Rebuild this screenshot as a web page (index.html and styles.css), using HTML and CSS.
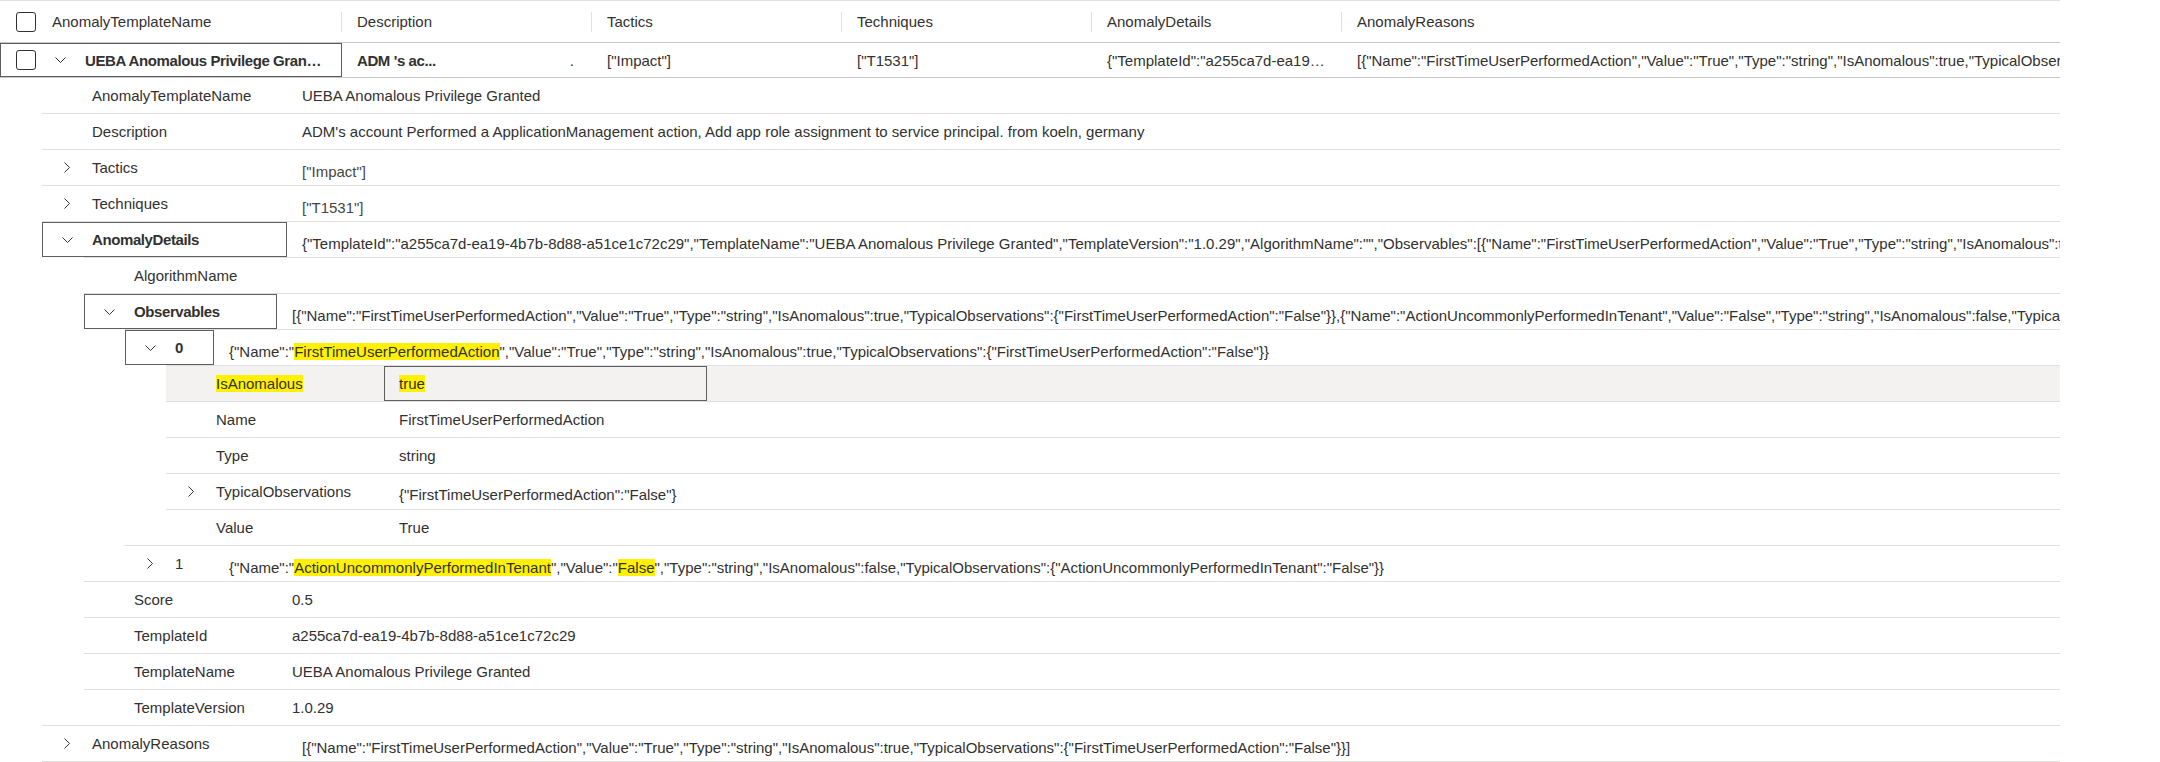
FILE: index.html
```html
<!DOCTYPE html>
<html lang="en">
<head>
    <meta charset="UTF-8">
    <meta name="viewport" content="width=device-width, initial-scale=1.0">
    <title>Anomalies</title>
    <link rel="stylesheet" href="styles.css">
</head>
<body>
    <div class="grid">
        <div class="head">
            <div class="hc first"><span class="box"></span>AnomalyTemplateName</div>
            <span class="sep"></span>
            <div class="hc">Description</div>
            <span class="sep"></span>
            <div class="hc">Tactics</div>
            <span class="sep"></span>
            <div class="hc">Techniques</div>
            <span class="sep"></span>
            <div class="hc">AnomalyDetails</div>
            <span class="sep"></span>
            <div class="hc last">AnomalyReasons</div>
        </div>

        <div class="r1">
            <div class="c first">
                <span class="box"></span>
                <svg class="chev-down" width="11" height="6" viewBox="0 0 11 6"><path d="M0.5 0.5 5.5 5.5 10.5 0.5" fill="none" stroke="#323130"/></svg>
                <span class="trunc strong">UEBA Anomalous Privilege Granted</span>
            </div>
            <div class="c desc"><b>ADM 's ac...</b><span>.</span></div>
            <div class="c">["Impact"]</div>
            <div class="c">["T1531"]</div>
            <div class="c">{"TemplateId":"a255ca7d-ea19-4b7b-8d88-a51ce1c72c29","TemplateName":"UEBA Anomalous Privilege Granted"}</div>
            <div class="c last">[{"Name":"FirstTimeUserPerformedAction","Value":"True","Type":"string","IsAnomalous":true,"TypicalObservations":{"FirstTimeUserPerformedAction":"False"}}]</div>
        </div>

        <div class="details lvl1">
            <div class="node">
                <div class="row"><div class="key"><span class="tog"></span>AnomalyTemplateName</div><div class="val">UEBA Anomalous Privilege Granted</div></div>
            </div>
            <div class="node">
                <div class="row"><div class="key"><span class="tog"></span>Description</div><div class="val">ADM's account Performed a ApplicationManagement action, Add app role assignment to service principal. from koeln, germany</div></div>
            </div>
            <div class="node">
                <div class="row exp"><div class="key"><span class="tog"><svg width="6" height="11" viewBox="0 0 6 11"><path d="M0.5 0.5 5.5 5.5 0.5 10.5" fill="none" stroke="#323130"/></svg></span>Tactics</div><div class="val dim">["Impact"]</div></div>
            </div>
            <div class="node">
                <div class="row exp"><div class="key"><span class="tog"><svg width="6" height="11" viewBox="0 0 6 11"><path d="M0.5 0.5 5.5 5.5 0.5 10.5" fill="none" stroke="#323130"/></svg></span>Techniques</div><div class="val dim">["T1531"]</div></div>
            </div>
            <div class="node">
                <div class="row exp"><div class="key focus"><span class="tog"><svg width="11" height="6" viewBox="0 0 11 6"><path d="M0.5 0.5 5.5 5.5 10.5 0.5" fill="none" stroke="#323130"/></svg></span><b>AnomalyDetails</b></div><div class="val">{"TemplateId":"a255ca7d-ea19-4b7b-8d88-a51ce1c72c29","TemplateName":"UEBA Anomalous Privilege Granted","TemplateVersion":"1.0.29","AlgorithmName":"","Observables":[{"Name":"FirstTimeUserPerformedAction","Value":"True","Type":"string","IsAnomalous":true,"TypicalObservations":{"FirstTimeUserPerformedAction":"False"}}]}</div></div>

                <div class="kids lvl2">
                    <div class="node">
                        <div class="row"><div class="key"><span class="tog"></span>AlgorithmName</div><div class="val"></div></div>
                    </div>
                    <div class="node">
                        <div class="row exp"><div class="key focus"><span class="tog"><svg width="11" height="6" viewBox="0 0 11 6"><path d="M0.5 0.5 5.5 5.5 10.5 0.5" fill="none" stroke="#323130"/></svg></span><b>Observables</b></div><div class="val">[{"Name":"FirstTimeUserPerformedAction","Value":"True","Type":"string","IsAnomalous":true,"TypicalObservations":{"FirstTimeUserPerformedAction":"False"}},{"Name":"ActionUncommonlyPerformedInTenant","Value":"False","Type":"string","IsAnomalous":false,"TypicalObservations":{"ActionUncommonlyPerformedInTenant":"False"}}]</div></div>

                        <div class="kids lvl3">
                            <div class="node">
                                <div class="row exp"><div class="key focus"><span class="tog"><svg width="11" height="6" viewBox="0 0 11 6"><path d="M0.5 0.5 5.5 5.5 10.5 0.5" fill="none" stroke="#323130"/></svg></span><b>0</b></div><div class="val">{"Name":"<span class="hl">FirstTimeUserPerformedAction</span>","Value":"True","Type":"string","IsAnomalous":true,"TypicalObservations":{"FirstTimeUserPerformedAction":"False"}}</div></div>

                                <div class="kids lvl4">
                                    <div class="node">
                                        <div class="row sel"><div class="key"><span class="tog"></span><span class="hl">IsAnomalous</span></div><div class="val focus"><span class="hl">true</span></div></div>
                                    </div>
                                    <div class="node">
                                        <div class="row"><div class="key"><span class="tog"></span>Name</div><div class="val">FirstTimeUserPerformedAction</div></div>
                                    </div>
                                    <div class="node">
                                        <div class="row"><div class="key"><span class="tog"></span>Type</div><div class="val">string</div></div>
                                    </div>
                                    <div class="node">
                                        <div class="row exp"><div class="key"><span class="tog"><svg width="6" height="11" viewBox="0 0 6 11"><path d="M0.5 0.5 5.5 5.5 0.5 10.5" fill="none" stroke="#323130"/></svg></span>TypicalObservations</div><div class="val">{"FirstTimeUserPerformedAction":"False"}</div></div>
                                    </div>
                                    <div class="node">
                                        <div class="row"><div class="key"><span class="tog"></span>Value</div><div class="val">True</div></div>
                                    </div>
                                </div>
                            </div>
                            <div class="node">
                                <div class="row exp"><div class="key"><span class="tog"><svg width="6" height="11" viewBox="0 0 6 11"><path d="M0.5 0.5 5.5 5.5 0.5 10.5" fill="none" stroke="#323130"/></svg></span>1</div><div class="val">{"Name":"<span class="hl">ActionUncommonlyPerformedInTenant</span>","Value":"<span class="hl">False</span>","Type":"string","IsAnomalous":false,"TypicalObservations":{"ActionUncommonlyPerformedInTenant":"False"}}</div></div>
                            </div>
                        </div>
                    </div>
                    <div class="node">
                        <div class="row"><div class="key"><span class="tog"></span>Score</div><div class="val">0.5</div></div>
                    </div>
                    <div class="node">
                        <div class="row"><div class="key"><span class="tog"></span>TemplateId</div><div class="val">a255ca7d-ea19-4b7b-8d88-a51ce1c72c29</div></div>
                    </div>
                    <div class="node">
                        <div class="row"><div class="key"><span class="tog"></span>TemplateName</div><div class="val">UEBA Anomalous Privilege Granted</div></div>
                    </div>
                    <div class="node">
                        <div class="row"><div class="key"><span class="tog"></span>TemplateVersion</div><div class="val">1.0.29</div></div>
                    </div>
                </div>
            </div>
            <div class="node">
                <div class="row exp"><div class="key"><span class="tog"><svg width="6" height="11" viewBox="0 0 6 11"><path d="M0.5 0.5 5.5 5.5 0.5 10.5" fill="none" stroke="#323130"/></svg></span>AnomalyReasons</div><div class="val">[{"Name":"FirstTimeUserPerformedAction","Value":"True","Type":"string","IsAnomalous":true,"TypicalObservations":{"FirstTimeUserPerformedAction":"False"}}]</div></div>
            </div>
        </div>
    </div>
</body>
</html>
```

FILE: styles.css
```css
body {
    margin: 0;
    background-color: #fff;
    color: #323130;
    font-family: "Segoe UI", "Liberation Sans", Arial, sans-serif;
    font-size: 15px;
}
b, .strong {
    font-weight: 600;
    letter-spacing: -0.4px;
}
.grid {
    width: 2060px;
    overflow: hidden;
}
.box {
    flex: none;
    width: 20px;
    height: 20px;
    box-sizing: border-box;
    border: 1px solid #323130;
    border-radius: 3px;
}
.head {
    display: flex;
    align-items: center;
    height: 41px;
    border-top: 1px solid #e1dfdd;
    border-bottom: 1px solid #c8c6c4;
}
.hc {
    flex: none;
    width: 249px;
    box-sizing: border-box;
    padding-left: 15px;
    white-space: nowrap;
}
.hc.first {
    width: 341px;
    display: flex;
    align-items: center;
    gap: 16px;
    padding-left: 16px;
}
.hc.last {
    flex: 1;
}
.sep {
    flex: none;
    width: 1px;
    height: 20px;
    background-color: #e1dfdd;
}
.r1 {
    display: flex;
    align-items: center;
    height: 34px;
    border-bottom: 1px solid #c8c6c4;
}
.r1 .c {
    flex: none;
    width: 250px;
    box-sizing: border-box;
    padding: 0 16px 0 15px;
    white-space: nowrap;
    overflow: hidden;
    text-overflow: ellipsis;
}
.r1 .c.first {
    width: 342px;
    height: 100%;
    display: flex;
    align-items: center;
    padding: 0 18px 0 16px;
    outline: 1px solid #605e5c;
    outline-offset: -1px;
}
.r1 .chev-down {
    flex: none;
    margin: 0 19px;
}
.r1 .c.desc {
    display: flex;
    justify-content: space-between;
    padding-right: 18px;
}
.r1 .c.last {
    flex: 1;
    padding-right: 0;
    text-overflow: clip;
}
.trunc {
    min-width: 0;
    overflow: hidden;
    text-overflow: ellipsis;
    white-space: nowrap;
}
.details {
    margin-left: 42px;
}
.node {
    border-bottom: 1px solid #e1dfdd;
}
.kids {
    border-top: 1px solid #e1dfdd;
}
.kids > .node:last-child {
    border-bottom: none;
}
.lvl2 {
    margin-left: 42px;
}
.lvl3, .lvl4 {
    margin-left: 41px;
}
.row {
    display: flex;
    align-items: center;
    height: 35px;
    white-space: nowrap;
}
.row.sel {
    background-color: #f3f2f1;
}
.key {
    flex: none;
    display: flex;
    align-items: center;
    height: 100%;
    box-sizing: border-box;
}
.tog {
    flex: none;
    width: 50px;
    display: flex;
    justify-content: center;
    align-items: center;
}
.focus {
    outline: 1px solid #605e5c;
    outline-offset: -1px;
}
.lvl1 > .node > .row > .key {
    width: 245px;
}
.lvl2 > .node > .row > .key {
    width: 193px;
}
.lvl3 > .node > .row > .key {
    width: 89px;
}
.lvl4 > .node > .row > .key {
    width: 218px;
}
.val {
    flex: 1;
    min-width: 0;
    overflow: hidden;
    padding-left: 15px;
}
.lvl4 .val {
    flex: none;
    width: 323px;
    height: 100%;
    display: flex;
    align-items: center;
    box-sizing: border-box;
}
.row.exp .val {
    padding-top: 8px;
}
.lvl4 .row.exp .val {
    padding-top: 6px;
}
.val.dim {
    color: #484644;
}
.hl {
    background-color: #fff100;
}
```
